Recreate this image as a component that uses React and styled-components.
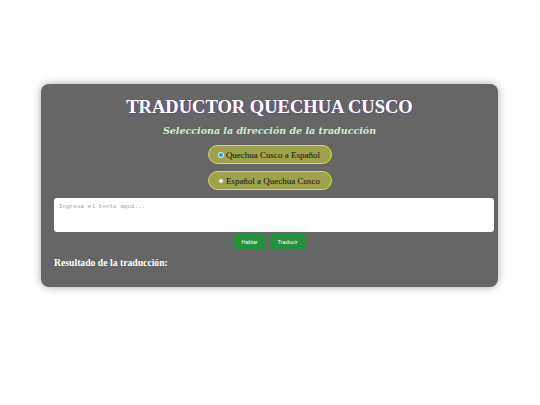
import React, { useState } from "react";
import styled, { createGlobalStyle } from "styled-components";

const GlobalStyle = createGlobalStyle`
  html, body {
    margin: 0;
    padding: 0;
    background: #ffffff;
  }
`;

const Page = styled.div`
  width: 540px;
  height: 405px;
  padding-top: 84px;
  box-sizing: border-box;
  display: flex;
  justify-content: center;
  align-items: flex-start;
`;

const Card = styled.div`
  width: 457px;
  height: 203px;
  margin-left: -1px;
  box-sizing: border-box;
  background: #666666;
  border-radius: 8px;
  box-shadow: 0 0 8px rgba(0, 0, 0, 0.35);
  padding: 11px 13px 0;
  display: flex;
  flex-direction: column;
  align-items: center;
  font-family: "Liberation Serif", "DejaVu Serif", serif;
`;

const Title = styled.h1`
  margin: 0;
  font-size: 18.5px;
  line-height: 24px;
  font-weight: bold;
  color: #ffffff;
  text-shadow: 1px 1px 2px #6a4a8a;
`;

const Subtitle = styled.h2`
  margin: 5px 0 0;
  font-family: "DejaVu Serif", serif;
  font-size: 9.5px;
  line-height: 14px;
  font-style: italic;
  font-weight: bold;
  color: #cdeed0;
`;

const Options = styled.div`
  margin-top: 7px;
  display: flex;
  flex-direction: column;
  gap: 7px;
  align-items: center;
`;

const Option = styled.label`
  width: 124px;
  height: 19px;
  box-sizing: border-box;
  background: #9ea24c;
  border: 1.5px solid #d2e048;
  border-radius: 10px;
  display: flex;
  align-items: center;
  justify-content: center;
  gap: 3px;
  font-family: "Liberation Serif", serif;
  font-size: 9px;
  color: #111111;
  cursor: pointer;
`;

const Dot = styled.span`
  width: 4px;
  height: 4px;
  border-radius: 50%;
  background: ${(p) => (p.$on ? "#3a8ee8" : "#ffffff")};
  box-shadow: ${(p) => (p.$on ? "0 0 0 1px #cfe4ff" : "none")};
`;

const TextArea = styled.textarea`
  margin-top: 8px;
  margin-right: -9px;
  align-self: stretch;
  height: 34px;
  box-sizing: border-box;
  border: none;
  border-radius: 3px;
  background: #ffffff;
  resize: none;
  padding: 5px 5px;
  font-family: "Liberation Mono", monospace;
  font-size: 6px;
  outline: none;
  &::placeholder {
    color: #a0a0a0;
  }
`;

const Buttons = styled.div`
  margin-top: 2px;
  display: flex;
  gap: 4px;
`;

const Button = styled.button`
  height: 15px;
  padding: 0 ${(p) => p.$pad}px;
  border: none;
  border-radius: 2px;
  background: #23903e;
  color: #ffffff;
  font-family: "Liberation Sans", Arial, sans-serif;
  font-size: 5.5px;
  cursor: pointer;
`;

const Result = styled.h3`
  align-self: flex-start;
  margin: 8px 0 0;
  font-size: 9.7px;
  font-weight: bold;
  color: #ffffff;
`;

export default function App() {
  const [dir, setDir] = useState("qu-es");
  return (
    <>
      <GlobalStyle />
      <Page>
        <Card>
          <Title>TRADUCTOR QUECHUA CUSCO</Title>
          <Subtitle>Selecciona la dirección de la traducción</Subtitle>
          <Options>
            <Option onClick={() => setDir("qu-es")}>
              <Dot $on={dir === "qu-es"} />
              Quechua Cusco a Español
            </Option>
            <Option onClick={() => setDir("es-qu")}>
              <Dot $on={dir === "es-qu"} />
              Español a Quechua Cusco
            </Option>
          </Options>
          <TextArea placeholder="Ingresa el texto aquí..." />
          <Buttons>
            <Button $pad={8}>Hablar</Button>
            <Button $pad={8}>Traducir</Button>
          </Buttons>
          <Result>Resultado de la traducción:</Result>
        </Card>
      </Page>
    </>
  );
}
